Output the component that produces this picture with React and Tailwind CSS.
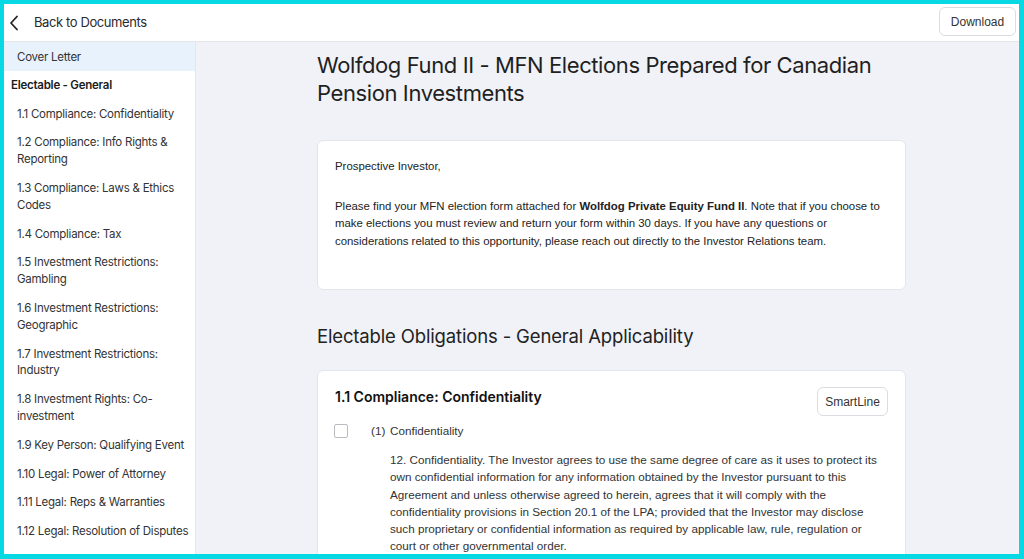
import React from 'react';

const navItems = [
    '1.1 Compliance: Confidentiality',
    '1.2 Compliance: Info Rights & Reporting',
    '1.3 Compliance: Laws & Ethics Codes',
    '1.4 Compliance: Tax',
    '1.5 Investment Restrictions: Gambling',
    '1.6 Investment Restrictions: Geographic',
    '1.7 Investment Restrictions: Industry',
    '1.8 Investment Rights: Co-investment',
    '1.9 Key Person: Qualifying Event',
    '1.10 Legal: Power of Attorney',
    '1.11 Legal: Reps & Warranties',
    '1.12 Legal: Resolution of Disputes',
    '1.13 Legal: Side Letters',
];

const ChevronLeft = () => (
    <svg width="10" height="16" viewBox="0 0 10 16" fill="none">
        <path d="M8 1.5 L2 8 L8 14.5" stroke="#222" strokeWidth="1.8" strokeLinecap="round" strokeLinejoin="round" />
    </svg>
);

export default function App() {
    return (
        <div className="w-[1024px] h-[559px] overflow-hidden border-t-4 border-l-4 border-r-[5px] border-b-[5px] border-[#06d8e4] bg-white font-['Inter',sans-serif]">
            <div className="flex flex-col h-full">
                {/* Top bar */}
                <header className="h-[38px] shrink-0 flex items-center justify-between border-b border-[#e4e6ea] bg-white">
                    <div className="flex items-center">
                        <span className="ml-[5px] flex items-center"><ChevronLeft /></span>
                        <span className="ml-[15px] text-[13px] tracking-[-0.4px] text-[#2a2a2a]">Back to Documents</span>
                    </div>
                    <button className="self-start mt-[3px] mr-[3px] h-[29px] w-[77px] rounded-md border border-[#d9dce1] bg-white text-[12px] text-[#333] font-['Liberation_Sans',sans-serif]">
                        Download
                    </button>
                </header>

                <div className="flex flex-1 min-h-0">
                    {/* Sidebar */}
                    <aside className="w-[192px] shrink-0 border-r border-[#e4e6ea] bg-white overflow-hidden text-[11.5px] tracking-[-0.25px] text-[#333]">
                        <div className="bg-[#e8f2fd] pl-[13px] pt-[7px] pb-[5px] leading-[16.8px]">Cover Letter</div>
                        <div className="pl-[7px] py-[6px] leading-[16.8px] font-semibold text-[#1a1a1a]">Electable - General</div>
                        {navItems.map((item) => (
                            <div key={item} className="pl-[13px] pr-[3px] py-[6px] leading-[16.8px]">{item}</div>
                        ))}
                    </aside>

                    {/* Main */}
                    <main className="flex-1 bg-[#f0f2f7] overflow-hidden">
                        <div className="ml-[121px] w-[589px] pt-[9px]">
                            <h1 className="text-[22px] leading-[28px] tracking-[-0.4px] text-[#1f1f1f]">
                                Wolfdog Fund II - MFN Elections Prepared for Canadian Pension Investments
                            </h1>

                            <div className="mt-[33px] rounded-md border border-[#e2e5ea] bg-white px-[17px] pt-[17px] pb-[39px] font-['Liberation_Sans',sans-serif] text-[11.4px] leading-[17.5px] text-[#222]">
                                <p>Prospective Investor,</p>
                                <p className="mt-[22px]">
                                    Please find your MFN election form attached for <span className="font-bold">Wolfdog Private Equity Fund II</span>. Note that if you choose to make elections you must review and return your form within 30 days. If you have any questions or considerations related to this opportunity, please reach out directly to the Investor Relations team.
                                </p>
                            </div>

                            <h2 className="mt-[34px] text-[18.5px] leading-[24px] tracking-[-0.15px] text-[#222]">
                                Electable Obligations - General Applicability
                            </h2>

                            <div className="mt-[22px] rounded-md border border-[#e2e5ea] bg-white px-[17px] pt-[16px] pb-[20px]">
                                <div className="flex items-start justify-between">
                                    <h3 className="text-[14px] leading-[20px] font-semibold text-[#111]">1.1 Compliance: Confidentiality</h3>
                                    <button className="h-[29px] w-[71px] rounded-md border border-[#d9dce1] bg-white text-[12px] text-[#333] font-['Liberation_Sans',sans-serif]">
                                        SmartLine
                                    </button>
                                </div>
                                <div className="mt-[6px] grid grid-cols-[36px_19px_1fr] font-['Liberation_Sans',sans-serif] text-[11.7px] leading-[17.2px] text-[#333]">
                                    <div className="pt-[2px]">
                                        <div className="ml-[-1px] h-[14px] w-[14px] rounded-[2px] border border-[#b9bcc1] bg-white" />
                                    </div>
                                    <div>(1)</div>
                                    <div>Confidentiality</div>
                                    <div className="col-start-3 mt-[12px] pr-[8px]">
                                        12. Confidentiality. The Investor agrees to use the same degree of care as it uses to protect its own confidential information for any information obtained by the Investor pursuant to this Agreement and unless otherwise agreed to herein, agrees that it will comply with the confidentiality provisions in Section 20.1 of the LPA; provided that the Investor may disclose such proprietary or confidential information as required by applicable law, rule, regulation or court or other governmental order.
                                    </div>
                                </div>
                            </div>
                        </div>
                    </main>
                </div>
            </div>
        </div>
    );
}
